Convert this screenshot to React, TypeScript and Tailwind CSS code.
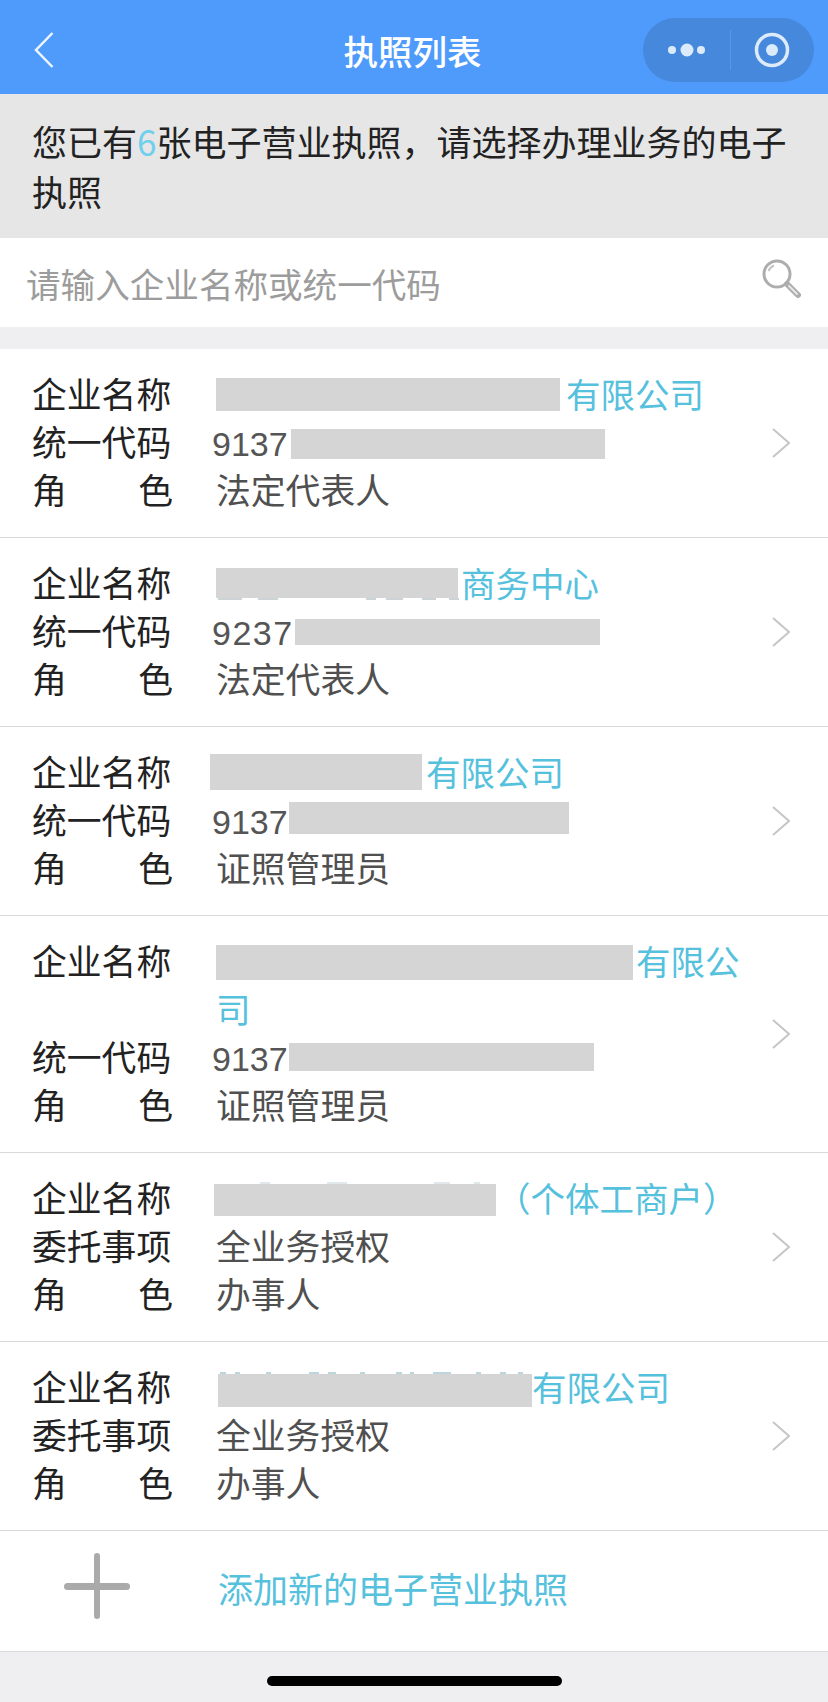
type Row = {
  nameBar: string;
  nameText: string;
  second: string;
  digits?: string;
  digitsClass?: string;
  codeBar?: string;
  value?: string;
  role: string;
  // leftovers of the blurred text that peek out past the grey bar
  specks?: string;
  specksClass?: string;
  specksColor?: string;
};

const rows: Row[] = [
  {
    nameBar: "w-[344px] h-[33px] ml-0 mr-[6px] align-[-3px]",
    nameText: "有限公司",
    second: "统一代码",
    digits: "9137",
    codeBar: "w-[314px] h-[30px] ml-[3px] align-[-3px]",
    role: "法定代表人",
  },
  {
    nameBar: "w-[242px] h-[30px] ml-0 mr-[3px] align-[-1px]",
    nameText: "商务中心",
    second: "统一代码",
    digits: "9237",
    digitsClass: "tracking-[1.5px]",
    codeBar: "w-[305px] h-[26px] ml-[1px] align-[0px]",
    role: "法定代表人",
    specks: "M2 1h24M42 1h20M150 1h10M170 1h17M206 1h14M233 1h10",
    specksClass: "left-0 top-full",
    specksColor: "#ccd3d6",
  },
  {
    nameBar: "w-[212px] h-[36px] -ml-[6px] mr-[4px] align-[-4px]",
    nameText: "有限公司",
    second: "统一代码",
    digits: "9137",
    codeBar: "w-[280px] h-[32px] ml-[1px] align-[0px]",
    role: "证照管理员",
  },
  {
    nameBar: "w-[417px] h-[35px] ml-0 mr-[3px] align-[-5px]",
    nameText: "有限公司",
    second: "统一代码",
    digits: "9137",
    codeBar: "w-[305px] h-[28px] ml-[1px] align-[0px]",
    role: "证照管理员",
  },
  {
    nameBar: "w-[282px] h-[32px] -ml-[2px] mr-0 align-[-4px]",
    nameText: "（个体工商户）",
    second: "委托事项",
    value: "全业务授权",
    role: "办事人",
    specks: "M46 1h10M113 1h20M220 1h16M260 1h6",
    specksClass: "left-0 bottom-full",
    specksColor: "#e0e8eb",
  },
  {
    nameBar: "w-[314px] h-[33px] ml-[2px] mr-0 align-[-6px]",
    nameText: "有限公司",
    second: "委托事项",
    value: "全业务授权",
    role: "办事人",
    specks: "M2 1h6M17 1h5M48 1h5M91 1h10M110 1h8M142 1h5M178 1h6M192 1h4M215 1h18M258 1h5M282 1h6M300 1h5",
    specksClass: "left-0 bottom-full",
    specksColor: "#bdd6de",
  },
];

function LicenseRow({ row }: { row: Row }) {
  return (
    <div className="flex items-center border-b border-[#d9d9d9] pl-[32px] pr-[38px]">
      <div className="w-[724px] pt-[20px] pb-[24px] text-[34.8px] leading-[48px]">
        <div className="flex">
          <div className="w-[184px] shrink-0 text-[#222222]">企业名称</div>
          <div className="w-[540px] text-[34.5px] text-[#55c1dd]">
            <span className={`relative inline-block bg-[#d5d5d5] ${row.nameBar}`}>
              {row.specks && (
                <svg width="314" height="2" viewBox="0 0 314 2" fill="none" className={`absolute ${row.specksClass}`}>
                  <path d={row.specks} stroke={row.specksColor} strokeWidth="2" />
                </svg>
              )}
            </span>
            {row.nameText}
          </div>
        </div>
        <div className="flex">
          <div className="w-[184px] shrink-0 text-[#222222]">{row.second}</div>
          {row.digits ? (
            <div className="h-[48px] -ml-[4px] text-[#555555]">
              <span className={`font-['Liberation_Sans',sans-serif] text-[34px] leading-none ${row.digitsClass ?? ""}`}>
                {row.digits}
              </span>
              <span className={`inline-block bg-[#d5d5d5] ${row.codeBar}`} />
            </div>
          ) : (
            <div className="text-[#505050]">{row.value}</div>
          )}
        </div>
        <div className="flex">
          <div className="flex w-[141px] mr-[43px] shrink-0 justify-between text-[#222222]">
            <span>角</span>
            <span>色</span>
          </div>
          <div className="text-[#505050]">{row.role}</div>
        </div>
      </div>
      <svg width="18" height="30" viewBox="0 0 18 30" fill="none" className="ml-auto shrink-0">
        <path d="M1 1 L17 15 L1 29" stroke="#c6c6c6" strokeWidth="2" />
      </svg>
    </div>
  );
}

export default function App() {
  return (
    <div className="w-[828px] h-[1702px] flex flex-col bg-[#efeff1] font-['Noto_Sans_CJK_SC','Liberation_Sans',sans-serif]">
      <header className="h-[94px] grid grid-cols-[1fr_auto_1fr] items-center bg-[#4f9bfb] pt-[6px] pl-[11px] pr-[14px]">
        <svg width="20" height="36" viewBox="0 0 20 36" fill="none" className="ml-[23px]">
          <path d="M18.5 1 L2 18 L18.5 35" stroke="#eef5ff" strokeWidth="2.5" />
        </svg>
        <div className="text-[34.5px] font-medium leading-[48px] text-white">执照列表</div>
        <div className="justify-self-end w-[171px] h-[64px] flex items-center rounded-full bg-[#4688dc]">
          <svg width="87" height="20" viewBox="0 0 87 20" className="shrink-0">
            <circle cx="29" cy="10" r="4" fill="#dcebfb" />
            <circle cx="44" cy="10" r="6.5" fill="#dcebfb" />
            <circle cx="58" cy="10" r="4" fill="#dcebfb" />
          </svg>
          <div className="w-px h-[40px] bg-[#5a97e2]" />
          <svg width="36" height="36" viewBox="0 0 36 36" fill="none" className="ml-[23px]">
            <circle cx="18" cy="18" r="15.5" stroke="#dcebfb" strokeWidth="3.5" />
            <circle cx="18" cy="18" r="6" fill="#dcebfb" />
          </svg>
        </div>
      </header>

      <div className="h-[144px] bg-[#e6e6e6] pl-[32px] pr-[30px] py-[22px] text-[35px] leading-[50px] text-[#222222]">
        您已有<span className="text-[#6fd0ee]">6</span>张电子营业执照，请选择办理业务的电子执照
      </div>

      <div className="h-[89px] flex items-center justify-between bg-white pl-[26px] pr-[26px]">
        <div className="text-[34.6px] leading-[48px] text-[#9c9c9c]">请输入企业名称或统一代码</div>
        <svg width="40" height="40" viewBox="0 0 40 40" fill="none" className="-mt-[7px]">
          <circle cx="15" cy="15" r="13" stroke="#adadad" strokeWidth="3" />
          <path d="M6.5 12 A10 10 0 0 1 12 6.5" stroke="#c4c4c4" strokeWidth="2" />
          <path d="M25 25 L36 36" stroke="#adadad" strokeWidth="6" strokeLinecap="round" />
          <path d="M27 27 L35 35" stroke="#e6e6e6" strokeWidth="2" strokeLinecap="round" />
        </svg>
      </div>

      <div className="mt-[22px] bg-white">
        {rows.map((row, i) => (
          <LicenseRow key={i} row={row} />
        ))}
        <div className="h-[121px] flex items-center border-b border-[#d9d9d9] pl-[64px]">
          <svg width="66" height="66" viewBox="0 0 66 66" className="shrink-0 -mt-[10px]">
            <rect x="0" y="30" width="66" height="7" rx="3.5" fill="#aaaaaa" />
            <rect x="30" y="0" width="6" height="66" rx="3" fill="#aaaaaa" />
          </svg>
          <div className="ml-[88px] -mt-[6px] text-[35px] leading-[48px] text-[#55c1dd]">添加新的电子营业执照</div>
        </div>
      </div>

      <div className="flex-1 flex justify-center pt-[24px]">
        <div className="w-[295px] h-[10px] rounded-full bg-black" />
      </div>
    </div>
  );
}
